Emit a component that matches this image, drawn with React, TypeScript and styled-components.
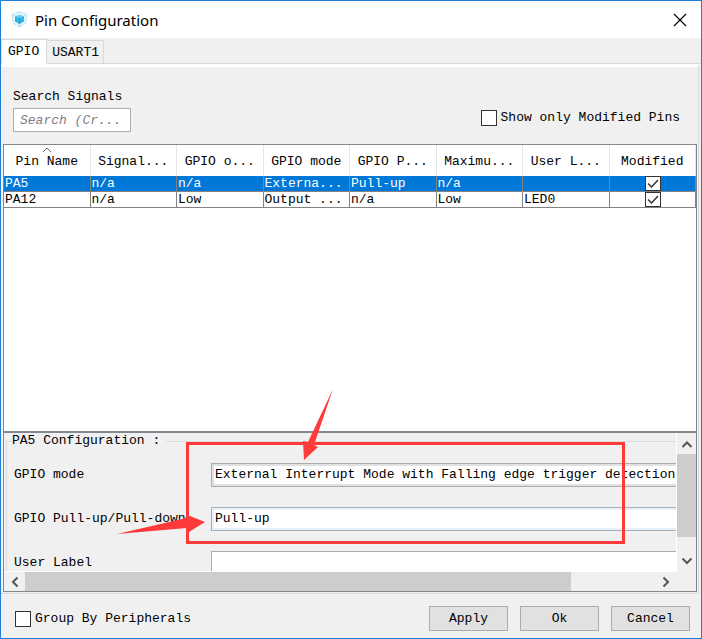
import React, { useId } from "react";
import styled, { createGlobalStyle } from "styled-components";

const GlobalStyle = createGlobalStyle`
  *, *::before, *::after { box-sizing: border-box; }
  body { margin: 0; background: #f0f0f0; color: #000; }
  body, button, input, select { font: 13px/16px "Liberation Mono", monospace; }
`;

const Dialog = styled.main`
  display: flex;
  flex-direction: column;
  min-height: 100vh;
  border: 1px solid #1a80d8;
  background: #f0f0f0;
  overflow: hidden;
`;

const TitleBar = styled.header`
  display: flex;
  align-items: center;
  gap: 7px;
  height: 37px;
  padding: 0 14px 0 10px;
  background: #fff;
`;

const Title = styled.h1`
  flex: 1;
  margin: 0;
  font: 400 15px/20px "Noto Sans", sans-serif;
`;

const CloseButton = styled.button`
  display: flex;
  padding: 0;
  border: 0;
  background: none;
  color: #000;
`;

const TabStrip = styled.div`
  display: flex;
  align-items: flex-end;
  height: 26px;
  border-bottom: 1px solid #d9d9d9;
`;

const Tab = styled.button<{ $active?: boolean }>`
  height: ${(p) => (p.$active ? 25 : 23)}px;
  margin-bottom: ${(p) => (p.$active ? -1 : 0)}px;
  padding: ${(p) => (p.$active ? "0 7px 1px 6px" : "1px 4px 0 5px")};
  border: 1px solid #d9d9d9;
  border-bottom: 0;
  border-left-width: ${(p) => (p.$active ? 1 : 0)}px;
  background: ${(p) => (p.$active ? "#fff" : "#f0f0f0")};
  color: #000;
`;

const TabPane = styled.section`
  flex: 1;
  display: flex;
  flex-direction: column;
  margin-right: 2px;
  padding: 0 1px 1px 2px;
  border-top: 3px solid #fff;
  border-right: 1px solid #d9d9d9;
  border-bottom: 1px solid #d9d9d9;
`;

const FilterBar = styled.div`
  display: flex;
  justify-content: space-between;
  align-items: flex-end;
  padding: 22px 17px 12px 10px;
`;

const SearchField = styled.label`
  display: flex;
  flex-direction: column;
  gap: 3px;
`;

const SearchInput = styled.input`
  width: 118px;
  height: 24px;
  padding: 0 6px;
  border: 1px solid #abadb3;
  background: #fff;
  &::placeholder { color: #808080; font-style: italic; opacity: 1; }
`;

const CheckLabel = styled.label<{ $raised?: boolean }>`
  display: flex;
  align-items: center;
  gap: 4px;
  padding-bottom: ${(p) => (p.$raised ? 6 : 0)}px;
`;

const CheckFrame = styled.span`
  display: inline-grid;
  vertical-align: top;
  width: 16px;
  height: 16px;
  & > * { grid-area: 1 / 1; }
  & > svg { pointer-events: none; }
`;

const CheckInput = styled.input`
  appearance: none;
  width: 16px;
  height: 16px;
  margin: 0;
  border: 1px solid #333;
  background: #fff;
  & + svg { visibility: hidden; }
  &:checked + svg { visibility: visible; }
`;

const TableArea = styled.div`
  flex: 1;
  border: 1px solid #828790;
  border-bottom: 0;
  background: #fff;
`;

const PinTable = styled.table`
  width: 100%;
  table-layout: fixed;
  border-collapse: separate;
  border-spacing: 0;
`;

const HeadCell = styled.th`
  height: 31px;
  padding: 0;
  border-right: 1px solid #e5e5e5;
  font-weight: 400;
  white-space: nowrap;
`;

const HeadContent = styled.div`
  display: flex;
  flex-direction: column;
  align-items: center;
  height: 31px;
  padding-top: 2px;
  & > span { margin-top: auto; padding-bottom: 6px; }
`;

const PinRow = styled.tr<{ $selected?: boolean }>`
  color: ${(p) => (p.$selected ? "#fff" : "#000")};
  background: ${(p) => (p.$selected ? "#0078d7" : "#fff")};
`;

const PinCell = styled.td<{ $center?: boolean }>`
  height: 16px;
  padding: 0 0 0 1px;
  line-height: 15px;
  border-right: 1px solid #828282;
  border-bottom: 1px solid #828282;
  white-space: nowrap;
  text-align: ${(p) => (p.$center ? "center" : "left")};
  ${CheckFrame} { height: 15px; }
  ${CheckInput} { height: 15px; }
`;

const ConfigPanel = styled.div`
  position: relative;
  display: grid;
  grid-template-columns: minmax(0, 1fr) 20px;
  grid-template-rows: 138px 20px;
  border: 1px solid #828790;
  border-top-width: 2px;
`;

const Viewport = styled.div`
  overflow: hidden;
  padding: 0 0 0 2px;
`;

const ConfigGroup = styled.fieldset`
  display: grid;
  gap: 20px;
  width: 740px;
  margin: 0;
  padding: 14px 8px 12px 7px;
  border: 1px solid #dcdcdc;
`;

const Legend = styled.legend`
  padding: 0 6px 0 0;
  margin-left: -2px;
`;

const FieldRow = styled.div`
  display: grid;
  grid-template-columns: 197px minmax(0, 1fr);
  align-items: center;
`;

const Combo = styled.select<{ $hot?: boolean }>`
  appearance: none;
  height: 24px;
  padding: 0 3px;
  border: 1px solid #adadad;
  border-radius: 0;
  background: #fff;
  color: #000;
  box-shadow: inset 0 0 0 2px ${(p) => (p.$hot ? "#e5f1fb" : "#e1e1e1")};
`;

const TextInput = styled.input`
  height: 24px;
  padding: 0 3px;
  border: 1px solid #abadb3;
  background: #fff;
`;

const ScrollTrack = styled.div<{ $vertical?: boolean }>`
  display: flex;
  flex-direction: ${(p) => (p.$vertical ? "column" : "row")};
  border: solid #fff;
  border-width: ${(p) => (p.$vertical ? "0 0 0 1px" : "1px 0 0")};
`;

const ScrollButton = styled.button`
  display: flex;
  align-items: center;
  justify-content: center;
  flex: 0 0 21px;
  padding: 0;
  border: 0;
  background: none;
`;

const ScrollThumb = styled.div<{ $share: number }>`
  flex: ${(p) => p.$share} 1 0;
  background: #cdcdcd;
`;

const ScrollRest = styled.div<{ $share: number }>`
  flex: ${(p) => p.$share} 1 0;
`;

const Annotation = styled.svg`
  position: absolute;
  left: 96px;
  top: -53px;
  pointer-events: none;
`;

const Footer = styled.footer`
  display: flex;
  align-items: center;
  justify-content: space-between;
  padding: 12px 11px 7px 14px;
`;

const ButtonGroup = styled.div`
  display: flex;
  gap: 12px;
`;

const PushButton = styled.button`
  width: 79px;
  height: 25px;
  padding: 0;
  border: 1px solid #adadad;
  background: #e1e1e1;
  color: #000;
`;

const Logo = () => (
  <svg width="17" height="17" viewBox="0 0 17 17" aria-hidden="true">
    <path d="M8.5 1 16 3.500 14.5 12 8.5 16 2.5 12 1 3.500Z" fill="#e8f7fd" stroke="#a5dcf2" strokeDasharray="3 1" />
    <path d="M2 4 8.5 7 15 4M8.5 13v3" fill="none" stroke="#b9e4f5" />
    <path d="M8.5 4 13 5.5v5L8.5 13 4 10.500v-5Z" fill="#35b4e8" />
    <path d="M4 5.500 8.500 7 13 5.500 8.500 4Z" fill="#6cccf0" />
    <path d="M8.500 7v6" stroke="#1f9dd6" />
  </svg>
);

const CloseIcon = () => (
  <svg width="14" height="14" viewBox="0 0 14 14" aria-hidden="true">
    <path d="M1 1 13 13M13 1 1 13" stroke="#000" strokeWidth="1.2" />
  </svg>
);

const paths = {
  up: "M1.500 9 6 4.500 10.500 9",
  down: "M1.500 3.500 6 8 10.500 3.500",
  left: "M8.500 1.500 4 6 8.500 10.500",
  right: "M3.500 1.500 8 6 3.500 10.500",
};

const Chevron = ({ to }: { to: keyof typeof paths }) => (
  <svg width="12" height="12" viewBox="0 0 12 12" aria-hidden="true">
    <path d={paths[to]} fill="none" stroke="#555" strokeWidth="2" />
  </svg>
);

const SortMark = () => (
  <svg width="10" height="6" viewBox="0 0 10 6" aria-hidden="true">
    <path d="M1 5 5 1 9 5" fill="none" stroke="#666" />
  </svg>
);

type CheckProps = { name: string; checked?: boolean };

const Check = ({ name, checked }: CheckProps) => (
  <CheckFrame>
    <CheckInput type="checkbox" aria-label={name} defaultChecked={checked} />
    <svg width="16" height="16" viewBox="0 0 16 16" aria-hidden="true">
      <path d="M3 7.500 6.500 11 13 4" fill="none" stroke="#333" strokeWidth="1.500" />
    </svg>
  </CheckFrame>
);

const columns = ["Pin Name", "Signal...", "GPIO o...", "GPIO mode", "GPIO P...", "Maximu...", "User L...", "Modified"];

const pins = [
  { cells: ["PA5", "n/a", "n/a", "Externa...", "Pull-up", "n/a", ""], selected: true },
  { cells: ["PA12", "n/a", "Low", "Output ...", "n/a", "Low", "LED0"], selected: false },
];

export default function App() {
  const id = useId();
  return (
    <>
      <GlobalStyle />
      <Dialog>
        <TitleBar>
          <Logo />
          <Title>Pin Configuration</Title>
          <CloseButton aria-label="Close"><CloseIcon /></CloseButton>
        </TitleBar>
        <TabStrip role="tablist">
          <Tab role="tab" aria-selected="true" $active>GPIO</Tab>
          <Tab role="tab" aria-selected="false">USART1</Tab>
        </TabStrip>
        <TabPane>
          <FilterBar>
            <SearchField>
              Search Signals
              <SearchInput placeholder="Search (Cr..." />
            </SearchField>
            <CheckLabel $raised>
              <Check name="Show only Modified Pins" />
              Show only Modified Pins
            </CheckLabel>
          </FilterBar>
          <TableArea>
            <PinTable>
              <thead>
                <tr>
                  {columns.map((name, i) => (
                    <HeadCell key={name} scope="col">
                      <HeadContent>
                        {i === 0 && <SortMark />}
                        <span>{name}</span>
                      </HeadContent>
                    </HeadCell>
                  ))}
                </tr>
              </thead>
              <tbody>
                {pins.map((pin) => (
                  <PinRow key={pin.cells[0]} $selected={pin.selected}>
                    {pin.cells.map((text, i) => <PinCell key={i}>{text}</PinCell>)}
                    <PinCell $center><Check name={`${pin.cells[0]} modified`} checked /></PinCell>
                  </PinRow>
                ))}
              </tbody>
            </PinTable>
          </TableArea>
          <ConfigPanel>
            <Viewport>
              <ConfigGroup>
                <Legend>PA5 Configuration :</Legend>
                <FieldRow>
                  <label htmlFor={`${id}-mode`}>GPIO mode</label>
                  <Combo id={`${id}-mode`}>
                    <option>External Interrupt Mode with Falling edge trigger detection</option>
                  </Combo>
                </FieldRow>
                <FieldRow>
                  <label htmlFor={`${id}-pull`}>GPIO Pull-up/Pull-down</label>
                  <Combo id={`${id}-pull`} $hot>
                    <option>Pull-up</option>
                  </Combo>
                </FieldRow>
                <FieldRow>
                  <label htmlFor={`${id}-label`}>User Label</label>
                  <TextInput id={`${id}-label`} />
                </FieldRow>
              </ConfigGroup>
            </Viewport>
            <ScrollTrack $vertical>
              <ScrollButton aria-label="Scroll up"><Chevron to="up" /></ScrollButton>
              <ScrollThumb $share={83} />
              <ScrollRest $share={13} />
              <ScrollButton aria-label="Scroll down"><Chevron to="down" /></ScrollButton>
            </ScrollTrack>
            <ScrollTrack>
              <ScrollButton aria-label="Scroll left"><Chevron to="left" /></ScrollButton>
              <ScrollThumb $share={546} />
              <ScrollRest $share={84} />
              <ScrollButton aria-label="Scroll right"><Chevron to="right" /></ScrollButton>
            </ScrollTrack>
            <Annotation width="540" height="180" viewBox="100 380 540 180" aria-hidden="true">
              <rect x="187.500" y="443.500" width="436" height="99" fill="none" stroke="#ff3a3a" strokeWidth="3" />
              <path d="M333 389 314 445 318 447 304 460 303 441 308 442Z" fill="#ff3a3a" />
              <path d="M117 534 182 519 190 516 205 522 189 532 187 528Z" fill="#ff3a3a" />
            </Annotation>
          </ConfigPanel>
        </TabPane>
        <Footer>
          <CheckLabel>
            <Check name="Group By Peripherals" />
            Group By Peripherals
          </CheckLabel>
          <ButtonGroup>
            <PushButton>Apply</PushButton>
            <PushButton>Ok</PushButton>
            <PushButton>Cancel</PushButton>
          </ButtonGroup>
        </Footer>
      </Dialog>
    </>
  );
}
